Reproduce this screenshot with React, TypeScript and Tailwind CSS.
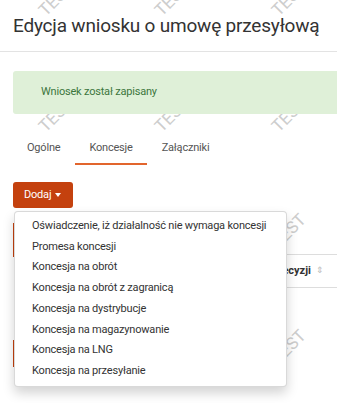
const ITEMS = [
  "Oświadczenie, iż działalność nie wymaga koncesji",
  "Promesa koncesji",
  "Koncesja na obrót",
  "Koncesja na obrót z zagranicą",
  "Koncesja na dystrybucje",
  "Koncesja na magazynowanie",
  "Koncesja na LNG",
  "Koncesja na przesyłanie",
];

// watermark grid, centre of each "TEST"
const MARKS = [
  "left-[56px] top-[-1px]",
  "left-[172px] top-[-1px]",
  "left-[289px] top-[-1px]",
  "left-[56px] top-[115px]",
  "left-[172px] top-[115px]",
  "left-[289px] top-[115px]",
  "left-[56px] top-[231px]",
  "left-[172px] top-[231px]",
  "left-[289px] top-[231px]",
  "left-[56px] top-[347px]",
  "left-[172px] top-[347px]",
  "left-[289px] top-[347px]",
];

function Watermark() {
  return (
    <div className="pointer-events-none absolute inset-0 z-0">
      {MARKS.map((pos) => (
        <span
          key={pos}
          className={`absolute ${pos} -translate-x-1/2 -translate-y-1/2 -rotate-45 text-[17px] leading-none text-[#cdcdcd]`}
        >
          TEST
        </span>
      ))}
    </div>
  );
}

export default function App() {
  return (
    <div
      className="relative h-[403px] w-[337px] overflow-hidden bg-white whitespace-nowrap"
      style={{ fontFamily: "Roboto, 'Liberation Sans', sans-serif" }}
    >
      <Watermark />

      <div className="relative z-10 flex flex-col">
        <div className="border-b border-[#e3e3e3] pb-[11px] pl-[13px] pt-[12px]">
          <h1 className="text-[19px] leading-[28px] tracking-[-0.2px] text-[#333]">Edycja wniosku o umowę przesyłową</h1>
        </div>

        <div className="ml-[13px] mr-[-10px] mt-[19px] flex h-[43px] items-center rounded-[3px] bg-[#dff0d8] pl-[28px] text-[11px] tracking-[-0.2px] text-[#3c763d]">
          Wniosek został zapisany
        </div>

        <div className="mt-[16px] flex gap-[1px] pl-[13px] text-[11px] tracking-[-0.2px] text-[#555]">
          <div className="border-b-2 border-transparent px-[14px] pb-[7px] pt-[9px] leading-[17px]">Ogólne</div>
          <div className="border-b-2 border-[#e2652d] px-[14px] pb-[7px] pt-[9px] leading-[17px]">Koncesje</div>
          <div className="border-b-2 border-transparent px-[14px] pb-[7px] pt-[9px] leading-[17px]">Załączniki</div>
        </div>

        <div className="mt-[17px] pl-[13px]">
          <button className="flex h-[26px] w-[60px] items-center rounded-[3px] bg-[#c4410e] pl-[11px] text-[11px] tracking-[-0.2px] text-white">
            Dodaj
            <span className="ml-[4px] h-0 w-0 border-x-[3px] border-t-[4px] border-x-transparent border-t-white" />
          </button>
        </div>

        <div className="relative">
          <div className="mt-[15px] flex pl-[13px]">
            <div className="flex w-[2px] flex-col">
              <div className="h-[34px] bg-[#c4410e]" />
              <div className="h-[83px]" />
              <div className="h-[27px] bg-[#c4410e]" />
            </div>
            <div className="flex-1">
              <div className="mt-[31px] flex h-[34px] items-center justify-end border-y border-[#dddddd] pr-[13px] text-[11px] font-bold text-[#333]">
                Data decyzji
                <span className="ml-[5px] text-[9px] font-normal text-[#bbb]">⇕</span>
              </div>
            </div>
          </div>

          <div className="absolute left-[14px] top-[3px] w-[273px] rounded-[4px] border border-black/15 bg-white py-[4px] shadow-[0_6px_12px_rgba(0,0,0,0.175)]">
            {ITEMS.map((item) => (
              <div key={item} className="px-[17px] text-[11px] leading-[20.7px] tracking-[-0.2px] text-[#333]">
                {item}
              </div>
            ))}
          </div>
        </div>
      </div>
    </div>
  );
}
